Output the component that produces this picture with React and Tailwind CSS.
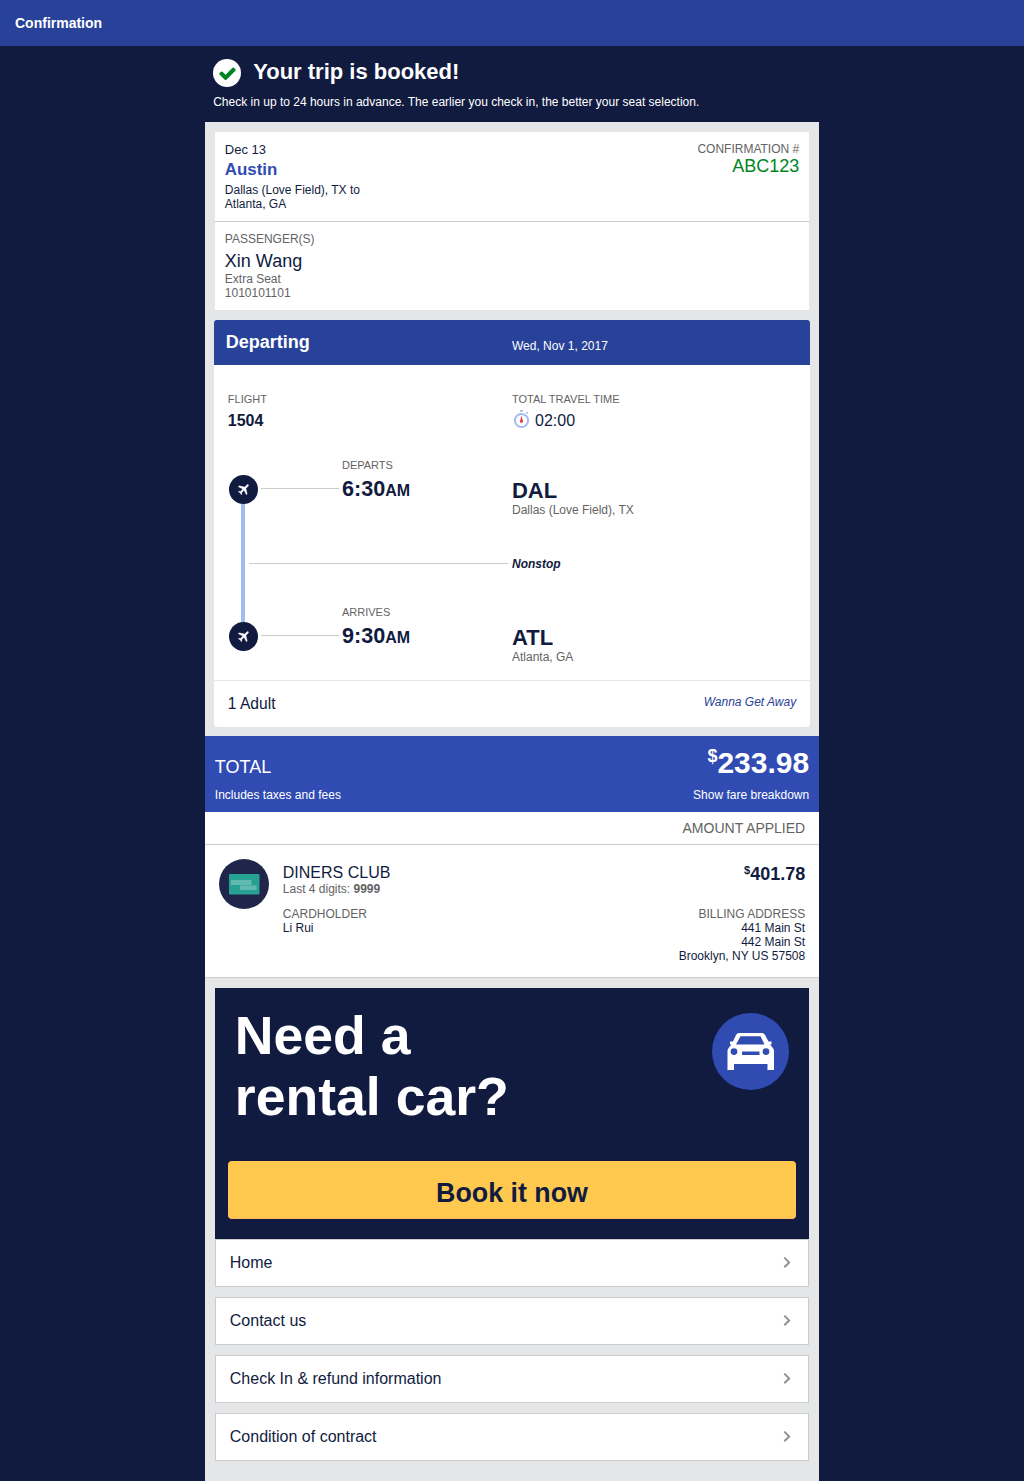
import React from "react";

function PlaneBadge() {
  return (
    <div className="flex h-[29px] w-[29px] shrink-0 items-center justify-center rounded-full bg-[#111b40] text-white">
      <svg className="mb-px ml-px h-[14.5px] w-[14.5px] rotate-45" viewBox="0 0 24 24" fill="currentColor">
        <path
          d="M21 16v-2l-8-5V3.500c0-.83-.67-1.500-1.500-1.500S10 2.670 10 3.500V9l-8 5v2l8-2.500V19l-2 1.500V22l3.500-1 3.500 1v-1.500L13 19v-5.500l8 2.500z"
          stroke="currentColor"
          strokeWidth="0.5"
        />
      </svg>
    </div>
  );
}

function Check() {
  return (
    <svg className="h-[19px] w-[19px]" viewBox="0 0 1792 1792" fill="currentColor">
      <path d="M1671 566q0 40-28 68l-724 724-136 136q-28 28-68 28t-68-28l-136-136-362-362q-28-28-28-68t28-68l136-136q28-28 68-28t68 28l294 295 656-657q28-28 68-28t68 28l136 136q28 28 28 68z" />
    </svg>
  );
}

function Stopwatch() {
  return (
    <svg className="mr-[4px] h-[20px] w-[19px] shrink-0" viewBox="0 0 19 20" fill="none">
      <circle cx="9.5" cy="11.5" r="6.6" stroke="#a3bbf3" strokeWidth="2" />
      <rect x="8" y="1" width="3" height="1.7" fill="#a3bbf3" />
      <rect x="14" y="3" width="2" height="1.5" fill="#a3bbf3" />
      <path d="M9.500 7l1.500 5.200a1.500 1.500 0 1 1-3 0z" fill="#e8303c" />
    </svg>
  );
}

function CreditCard() {
  return (
    <svg className="h-[50px] w-[50px] shrink-0" viewBox="0 0 50 50">
      <circle cx="25" cy="25" r="25" fill="#20264a" />
      <rect x="10" y="15" width="30.5" height="20.5" rx="1.3" fill="#28a195" />
      <rect x="12" y="21" width="20.5" height="5" fill="#62b9b0" />
      <rect x="21" y="26.500" width="16.5" height="4.500" fill="#62b9b0" />
    </svg>
  );
}

function Car() {
  return (
    <svg className="h-[77px] w-[77px] shrink-0" viewBox="0 0 77 77">
      <circle cx="38.5" cy="38.5" r="38.5" fill="#304cb2" />
      <path
        fill="#fff"
        fillRule="evenodd"
        d="M27 20h23q2 0 3 2l3.500 6.500h3v3H58l2.500 3q1.500 1.500 1.500 3.500V57h-6.500v-6H22v6h-6.500V38q0-2 1.500-3.500l2.500-3h-1.500v-3h3L24 22q1-2 3-2zM28.500 23.200L24 31.500h28.500L48.500 23.200zM22 35.200a3.400 3.400 0 1 0 0 6.800 3.400 3.400 0 0 0 0-6.800zM54 35.200a3.400 3.400 0 1 0 0 6.800 3.400 3.400 0 0 0 0-6.800zM30 38.500v3.500h17.500v-3.500z"
      />
    </svg>
  );
}

function Chevron() {
  return (
    <svg className="mb-[2px] h-[12px] w-[8px]" viewBox="0 0 8 12" fill="none">
      <path d="M1.300 1.600L6.100 6.400l-4.800 4.800" stroke="#909090" strokeWidth="2" />
    </svg>
  );
}

function Time({ label, time }) {
  return (
    <div>
      <div className="text-[11px] leading-[14px] text-[#636363]">{label}</div>
      <div className="mt-[4px] text-[21.6px] leading-[26px] font-bold">
        {time}
        <span className="text-[16px]">AM</span>
      </div>
    </div>
  );
}

function Place({ code, city }) {
  return (
    <div className="pt-[20px]">
      <div className="text-[22px] leading-[25px] font-bold">{code}</div>
      <div className="text-[12px] leading-[14px] text-[#636363]">{city}</div>
    </div>
  );
}

const links = ["Home", "Contact us", "Check In & refund information", "Condition of contract"];

export default function App() {
  return (
    <div className="min-h-[1481px] bg-[#111b40] font-['Liberation_Sans',Arial,sans-serif] text-[#111b40]">
      <header className="flex h-[46px] items-center bg-[#284299] px-[15px] text-[14px] leading-[16px] font-bold text-white">
        Confirmation
      </header>

      <main className="mx-auto w-[614.4px]">
        <div className="h-[76px] px-[8.4px] pt-[13px] text-white">
          <div className="flex h-[28px] items-center">
            <div className="flex h-[28px] w-[28px] items-center justify-center rounded-full bg-white text-[#008522]">
              <Check />
            </div>
            <h1 className="mb-[3px] ml-[12px] text-[22px] leading-[25px] font-bold">Your trip is booked!</h1>
          </div>
          <p className="mt-[8px] text-[12px] leading-[14px]">
            Check in up to 24 hours in advance. The earlier you check in, the better your seat selection.
          </p>
        </div>

        <div className="min-h-[1359px] bg-[#e5e6e8] pt-[10px]">
          <section className="mx-[10px] h-[178px] bg-white">
            <div className="flex h-[90px] justify-between border-b border-[#ccc] px-[10px] pt-[10px]">
              <div>
                <div className="text-[13px] leading-[15px]">Dec 13</div>
                <div className="mt-[3px] text-[16.9px] leading-[20px] font-bold text-[#304cb2]">Austin</div>
                <div className="mt-[3px] text-[12px] leading-[14px]">
                  Dallas (Love Field), TX to
                  <br />
                  Atlanta, GA
                </div>
              </div>
              <div className="text-right">
                <div className="text-[12px] leading-[14px] text-[#636363]">CONFIRMATION #</div>
                <div className="text-[18px] leading-[20px] text-[#008522]">ABC123</div>
              </div>
            </div>
            <div className="px-[10px] pt-[10px] text-[12px] leading-[14px] text-[#636363]">
              <div>PASSENGER(S)</div>
              <div className="mt-[5px] mb-[1px] text-[18px] leading-[20px] text-[#111b40]">Xin Wang</div>
              <div>Extra Seat</div>
              <div>1010101101</div>
            </div>
          </section>

          <section className="mx-[9px] mt-[10px] h-[407px] overflow-hidden rounded-[3px] bg-white">
            <div className="grid h-[45px] grid-cols-[286.2px_1fr] bg-[#284299] pl-[12px] text-white">
              <h2 className="pt-[12px] text-[18px] leading-[20px] font-bold">Departing</h2>
              <div className="pt-[19px] text-[12px] leading-[14px]">Wed, Nov 1, 2017</div>
            </div>

            <div className="grid h-[93px] grid-cols-[284.2px_1fr] pt-[28px] pl-[14px]">
              <div>
                <div className="text-[11px] leading-[13px] text-[#636363]">FLIGHT</div>
                <div className="mt-[5px] text-[16px] leading-[20px] font-bold">1504</div>
              </div>
              <div>
                <div className="text-[11px] leading-[13px] text-[#636363]">TOTAL TRAVEL TIME</div>
                <div className="mt-[3px] flex text-[16px] leading-[20px]">
                  <Stopwatch />
                  <span className="pt-[2px]">02:00</span>
                </div>
              </div>
            </div>

            <div className="grid grid-cols-[114.2px_170px_1fr] grid-rows-[89px_58px_75px] pl-[14px]">
              <div className="col-start-1 row-span-3 row-start-1 ml-[1.2px] flex w-[29px] flex-col items-center pt-[17px]">
                <PlaneBadge />
                <div className="mr-px h-[118px] w-[4px] bg-[#a3bbf3]" />
                <PlaneBadge />
              </div>
              <div className="col-start-1 row-start-1 mt-[30px] mr-[3px] ml-[33px] h-px bg-[#ccc]" />
              <div className="col-span-2 col-start-1 row-start-2 mt-[16px] mr-[4px] ml-[21px] h-px bg-[#ccc]" />
              <div className="col-start-1 row-start-3 mt-[30px] mr-[3px] ml-[33px] h-px bg-[#ccc]" />
              <div className="col-start-2 row-start-1">
                <Time label="DEPARTS" time="6:30" />
              </div>
              <div className="col-start-3 row-start-1">
                <Place code="DAL" city="Dallas (Love Field), TX" />
              </div>
              <div className="col-start-3 row-start-2 pt-[10px] text-[12px] leading-[14px] font-bold italic">
                Nonstop
              </div>
              <div className="col-start-2 row-start-3">
                <Time label="ARRIVES" time="9:30" />
              </div>
              <div className="col-start-3 row-start-3">
                <Place code="ATL" city="Atlanta, GA" />
              </div>
            </div>

            <div className="flex h-[47px] justify-between border-t border-[#e5e6e8] px-[14px] pt-[14px]">
              <div className="text-[15.6px] leading-[18px]">1 Adult</div>
              <div className="text-[12px] leading-[14px] text-[#284299] italic">Wanna Get Away</div>
            </div>
          </section>

          <section className="mt-[9px] h-[76px] bg-[#304cb2] px-[10px] text-white">
            <div className="flex h-[52px] items-start justify-between">
              <div className="pt-[21px] text-[18px] leading-[20px]">TOTAL</div>
              <div className="flex items-start font-bold">
                <span className="pt-[10px] text-[18px] leading-[20px]">$</span>
                <span className="pt-[10px] text-[30px] leading-[34px]">233.98</span>
              </div>
            </div>
            <div className="flex justify-between text-[12px] leading-[14px]">
              <span>Includes taxes and fees</span>
              <span>Show fare breakdown</span>
            </div>
          </section>

          <section className="border-b border-[#ccc] bg-white">
            <div className="h-[33px] border-b border-[#ccc] pt-[8px] pr-[14px] text-right text-[14px] leading-[16px] text-[#636363]">
              AMOUNT APPLIED
            </div>
            <div className="flex h-[132px] px-[14px] pt-[14px] text-[12px] leading-[14px]">
              <CreditCard />
              <div className="ml-[14px] flex-1">
                <div className="pt-[4px] text-[16px] leading-[19px]">DINERS CLUB</div>
                <div className="text-[#636363]">
                  Last 4 digits: <b>9999</b>
                </div>
                <div className="mt-[11px] text-[#636363]">CARDHOLDER</div>
                <div>Li Rui</div>
              </div>
              <div className="text-right">
                <div className="flex h-[48px] items-start justify-end font-bold">
                  <span className="pt-[5px] text-[11px] leading-[13px]">$</span>
                  <span className="pt-[5px] text-[18px] leading-[20px]">401.78</span>
                </div>
                <div className="text-[#636363]">BILLING ADDRESS</div>
                <div>441 Main St</div>
                <div>442 Main St</div>
                <div>Brooklyn, NY US 57508</div>
              </div>
            </div>
          </section>

          <section className="mx-[10px] mt-[10px] h-[251px] bg-[#111b40] px-[13px]">
            <div className="flex h-[173px] justify-between pr-[7px] pl-[7px]">
              <h2 className="pt-[17px] text-[53.6px] leading-[61px] font-bold text-white">
                Need a<br />
                rental car?
              </h2>
              <div className="pt-[25px]">
                <Car />
              </div>
            </div>
            <button className="block h-[58px] w-full rounded-[4px] border-b border-[#ffb765] bg-[#ffc94f] pt-[7px] text-[26.8px] leading-[31px] font-bold">
              Book it now
            </button>
          </section>

          <nav className="mx-[10px] flex flex-col gap-[10px]">
            {links.map((label) => (
              <a
                key={label}
                className="flex h-[48px] items-center justify-between border border-[#ccc] bg-white pr-[17px] pl-[14px] text-[16px] leading-[18px]"
              >
                {label}
                <Chevron />
              </a>
            ))}
          </nav>
        </div>
      </main>
    </div>
  );
}
